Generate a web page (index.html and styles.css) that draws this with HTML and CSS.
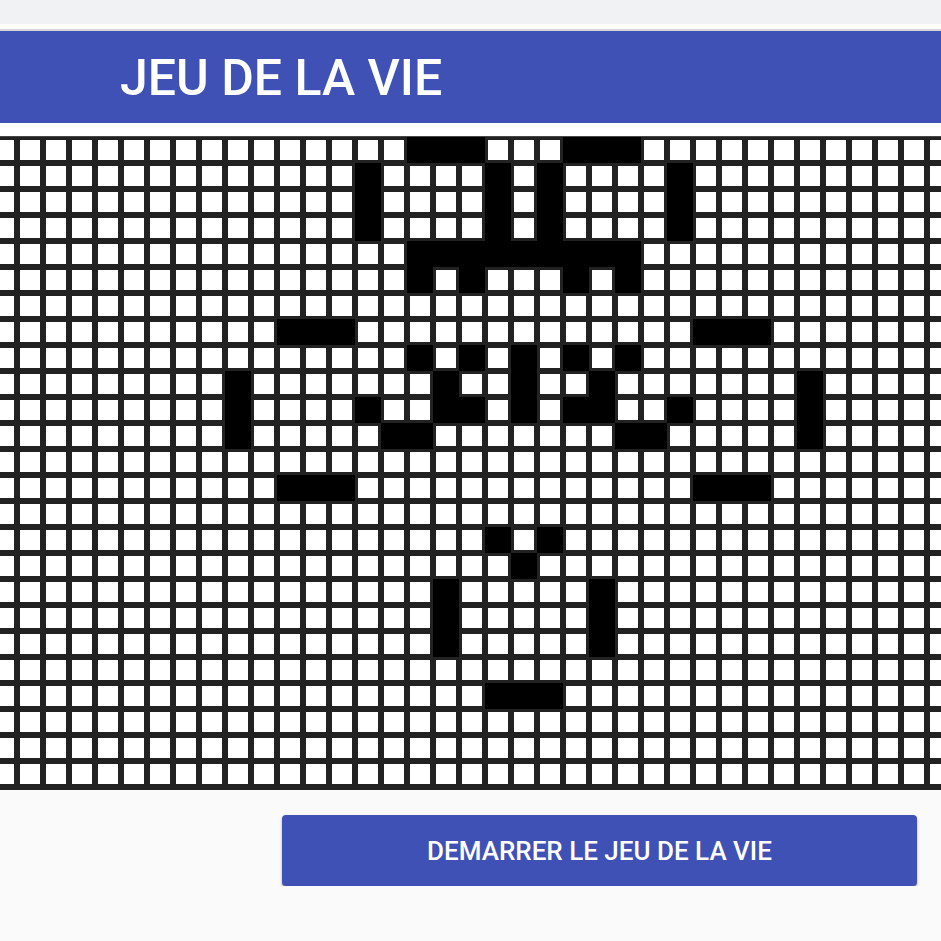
FILE: index.html
```html
<!DOCTYPE html>
<html lang="fr">
<head>
<meta charset="utf-8">
<title>Jeu de la vie</title>
<link rel="stylesheet" href="styles.css">
</head>
<body>
<div class="topbar"></div>
<div class="sheet">
  <header class="toolbar">
    <h1 class="title">JEU DE LA VIE</h1>
  </header>
  <div class="gap"></div>
</div>
<main class="board-wrap">
  <div class="board" id="board"></div>
</main>
<div class="actions">
  <button class="start-btn" type="button">DEMARRER LE JEU DE LA VIE</button>
</div>
<script src="script.js"></script>
</body>
</html>
```

FILE: styles.css
```css
* { box-sizing: border-box; }
html, body { margin: 0; padding: 0; }
body {
  background: #fafafa;
  font-family: Roboto, "Liberation Sans", Arial, sans-serif;
  width: 941px;
  overflow: hidden;
}
.topbar {
  height: 24px;
  background: #f1f2f4;
}
.sheet {
  background: #ffffff;
  padding-top: 5px;
}
.toolbar {
  border-top: 2px solid #d6d6d8;
  background: #3f51b5;
  height: 94px;
  display: flex;
  align-items: center;
  padding-left: 120px;
}
.title {
  margin: 0;
  color: #ffffff;
  font-size: 50px;
  font-weight: 500;
  letter-spacing: 0;
  line-height: 1;
  padding-top: 2px;
}
.gap {
  height: 13px;
  background: #ffffff;
}
.board-wrap {
  width: 941px;
  overflow: hidden;
  border-top: 1px solid #464646;
  border-bottom: 3px solid #222222;
  background: #222222;
}
.board {
  display: grid;
  grid-template-columns: repeat(37, 26px);
  grid-auto-rows: 26px;
  margin-left: -9px;
  width: 962px;
}
.cell {
  border: 3px solid #222222;
  background: #ffffff;
}
.cell.alive {
  background: #000000;
  border-color: #000000;
}
.actions {
  display: flex;
  justify-content: flex-end;
  padding: 25px 24px 0 0;
}
.start-btn {
  width: 635px;
  height: 71px;
  border: none;
  border-radius: 4px;
  background: #3f51b5;
  color: #ffffff;
  font-family: Roboto, "Liberation Sans", Arial, sans-serif;
  font-size: 26px;
  font-weight: 500;
  box-shadow: 0 2px 3px rgba(0,0,0,0.28), 0 1px 1px rgba(0,0,0,0.14);
  cursor: pointer;
}
```

FILE: script.js
```js
(function () {
  var rows = 25, cols = 37, offset = -1;
  var alive = {
    0: [15,16,17,21,22,23],
    1: [13,18,20,25],
    2: [13,18,20,25],
    3: [13,18,20,25],
    4: [15,16,17,18,19,20,21,22,23],
    5: [15,17,21,23],
    7: [10,11,12,26,27,28],
    8: [15,17,19,21,23],
    9: [8,16,19,22,30],
    10: [8,13,16,17,19,21,22,25,30],
    11: [8,14,15,23,24,30],
    13: [10,11,12,26,27,28],
    15: [18,20],
    16: [19],
    17: [16,22],
    18: [16,22],
    19: [16,22],
    21: [18,19,20]
  };
  var board = document.getElementById('board');
  var frag = document.createDocumentFragment();
  for (var r = 0; r < rows; r++) {
    var live = alive[r] || [];
    for (var c = 0; c < cols; c++) {
      var k = c + offset;
      var d = document.createElement('div');
      d.className = live.indexOf(k) >= 0 ? 'cell alive' : 'cell';
      frag.appendChild(d);
    }
  }
  board.appendChild(frag);
})();
```
